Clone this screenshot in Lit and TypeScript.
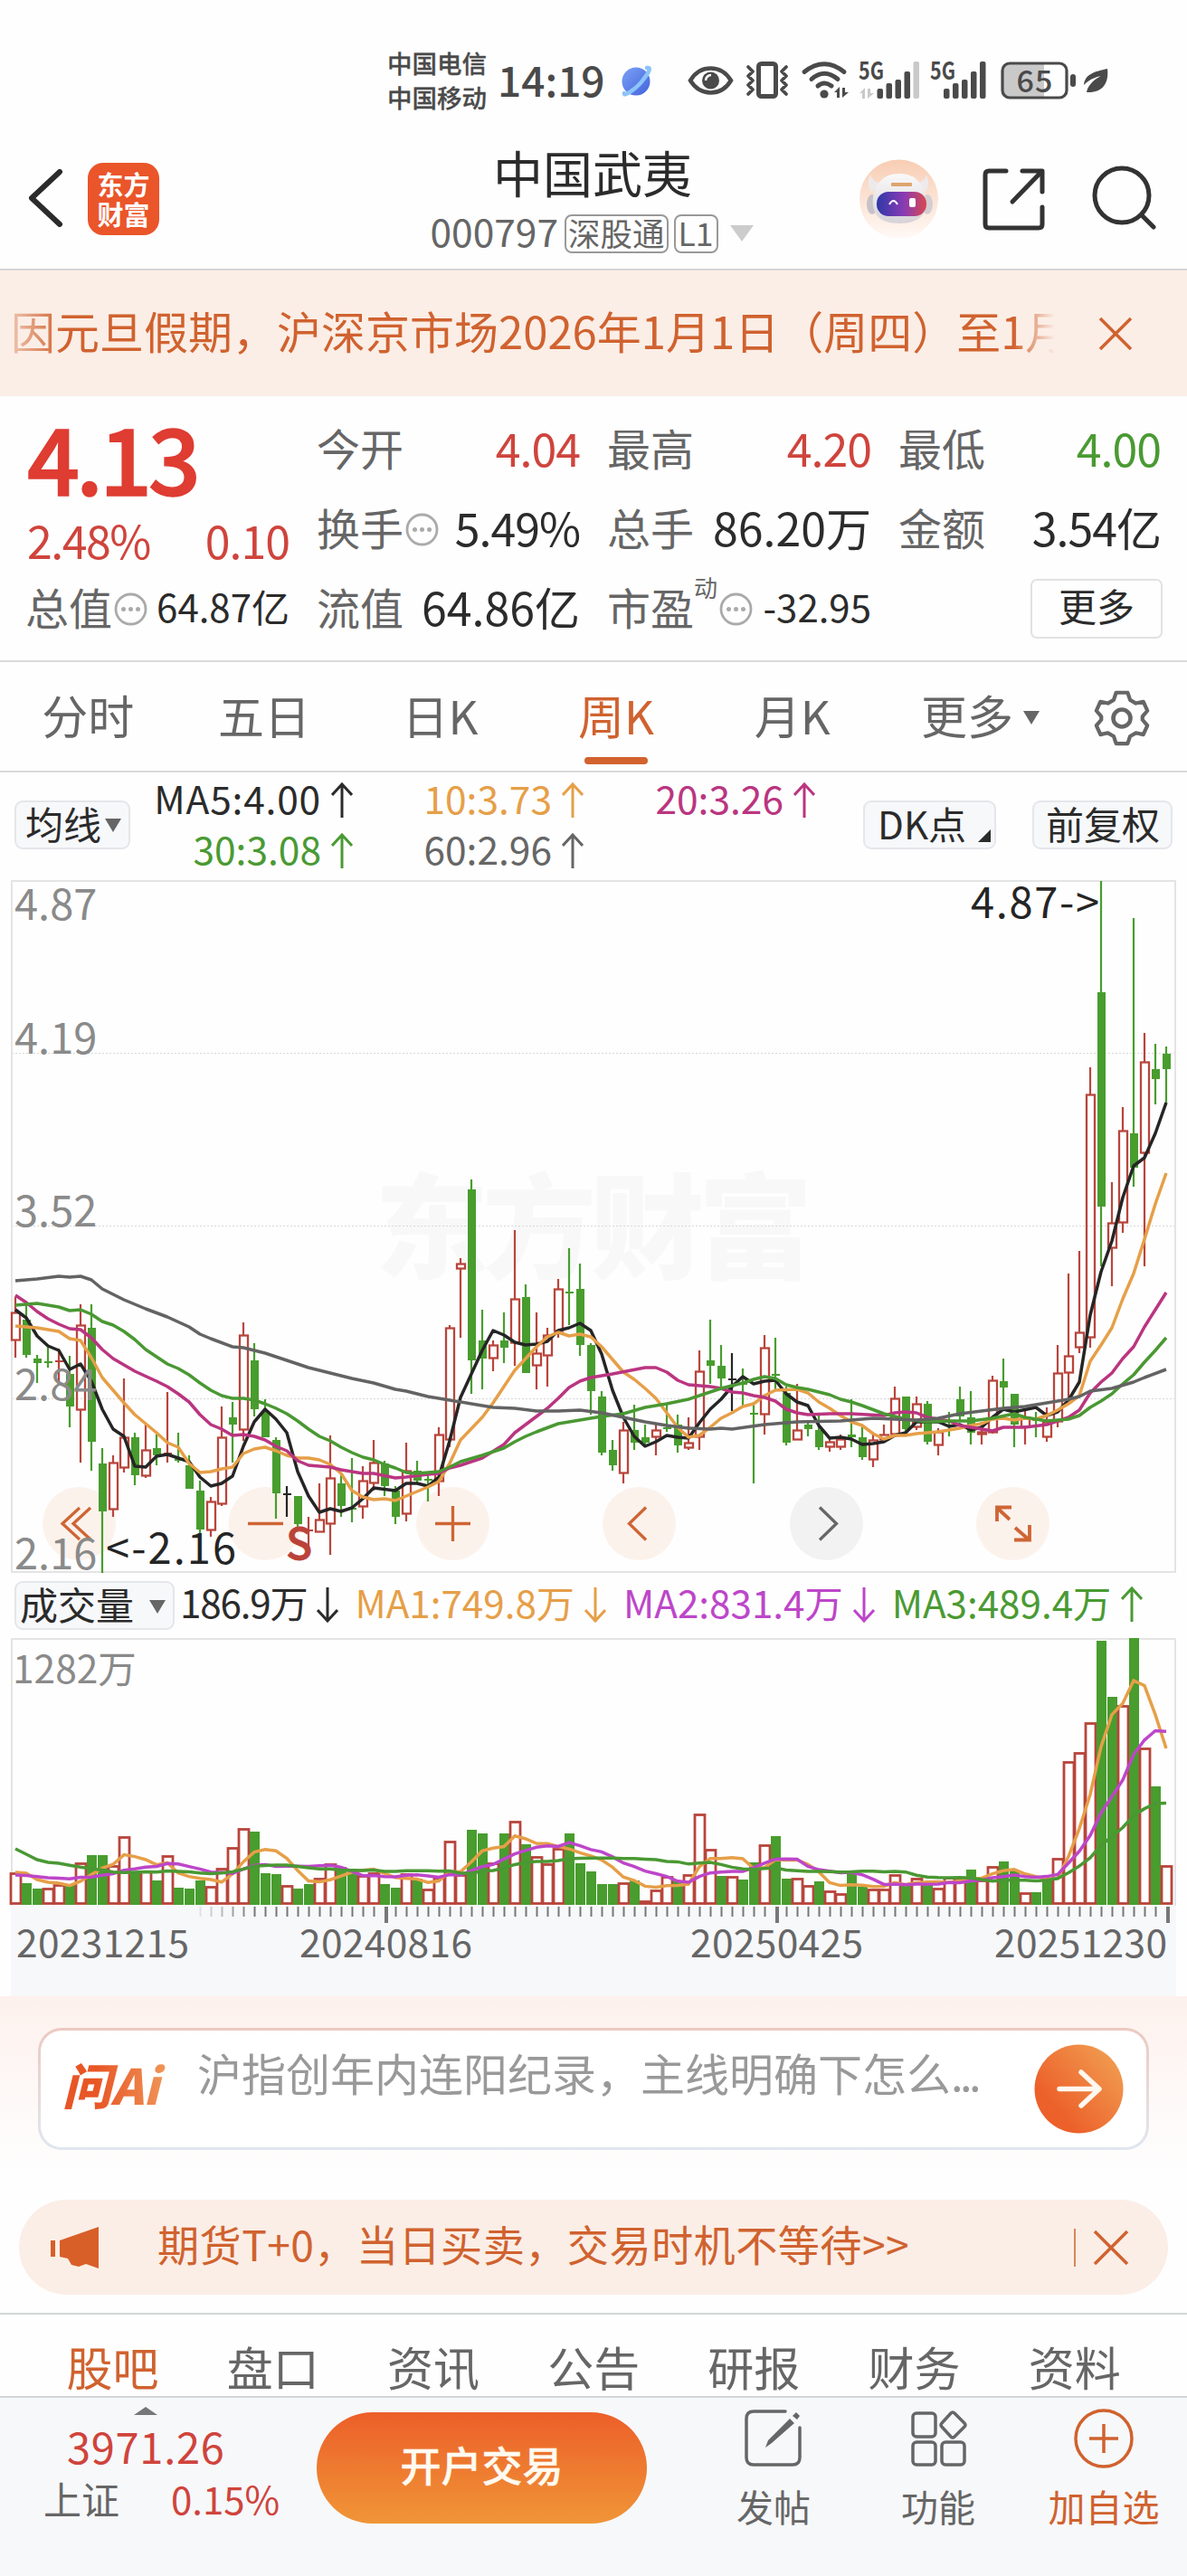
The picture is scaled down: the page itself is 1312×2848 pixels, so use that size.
import { LitElement, html, svg, css } from 'lit';
import { customElement, property } from 'lit/decorators.js';

type Candle = [string, number, number, number, number];
type Point = [number, number];

const RED = '#b8453c';
const GREEN = '#489d2e';
const ORANGE = '#e69f48';
const STEP = 12;
const FIRST_X = 17;

const cx = (i: number) => FIRST_X + i * STEP;

// colour, high, body top, body bottom, low (offsets from the top of the chart)
const candles: Candle[] = [
  ['r', 460, 477, 508, 527], ['g', 468, 485, 524, 527], ['g', 524, 528, 533, 555], ['g', 515, 531, 533, 538],
  ['r', 517, 530, 531, 553], ['g', 525, 545, 581, 604], ['r', 468, 491, 585, 643], ['g', 468, 494, 620, 652],
  ['g', 627, 644, 697, 765], ['r', 635, 643, 695, 703], ['r', 550, 615, 649, 654], ['g', 610, 615, 657, 668],
  ['r', 601, 629, 658, 660], ['g', 612, 627, 635, 646], ['r', 565, 632, 634, 643], ['g', 610, 639, 640, 643],
  ['g', 635, 646, 672, 672], ['g', 663, 674, 717, 723], ['r', 681, 686, 718, 725], ['r', 581, 615, 689, 691],
  ['g', 576, 593, 601, 643], ['r', 488, 502, 607, 619], ['g', 511, 530, 584, 592], ['g', 573, 586, 615, 615],
  ['g', 615, 618, 677, 705], ['k', 669, 677, 678, 703], ['g', 680, 680, 711, 714], ['r', 703, 717, 719, 736],
  ['r', 666, 706, 720, 720], ['r', 613, 660, 711, 745], ['g', 655, 666, 691, 703], ['g', 638, 693, 695, 709],
  ['r', 647, 663, 692, 705], ['r', 618, 643, 666, 674], ['g', 641, 644, 669, 680], ['g', 669, 674, 703, 711],
  ['r', 621, 652, 700, 708], ['g', 641, 652, 663, 665], ['g', 656, 661, 663, 686], ['r', 604, 612, 664, 680],
  ['r', 491, 494, 618, 626], ['r', 417, 423, 429, 505], ['g', 330, 341, 530, 567], ['g', 474, 508, 528, 562],
  ['r', 508, 513, 528, 542], ['g', 477, 508, 516, 533], ['r', 386, 462, 511, 536], ['g', 446, 460, 544, 544],
  ['r', 477, 522, 536, 562], ['r', 494, 502, 525, 559], ['r', 440, 451, 498, 505], ['g', 406, 454, 455, 491],
  ['g', 423, 451, 513, 525], ['g', 511, 513, 564, 590], ['g', 564, 570, 632, 635], ['g', 618, 629, 646, 652],
  ['r', 598, 607, 655, 666], ['g', 579, 607, 621, 629], ['g', 601, 615, 621, 624], ['r', 601, 607, 615, 635],
  ['g', 578, 604, 606, 609], ['g', 590, 601, 624, 632], ['r', 593, 621, 627, 629], ['r', 519, 542, 615, 629],
  ['g', 485, 530, 536, 556], ['g', 513, 536, 550, 559], ['k', 522, 550, 551, 586], ['g', 539, 555, 557, 581],
  ['g', 576, 588, 589, 666], ['r', 502, 516, 590, 612], ['g', 505, 545, 547, 562], ['g', 559, 566, 621, 624],
  ['r', 556, 607, 618, 618], ['g', 596, 601, 606, 614], ['g', 591, 607, 626, 629], ['r', 614, 620, 626, 631],
  ['r', 612, 617, 626, 629], ['g', 573, 612, 615, 626], ['g', 603, 615, 637, 640], ['r', 612, 618, 640, 648],
  ['r', 601, 612, 618, 620], ['r', 559, 572, 612, 612], ['g', 570, 570, 606, 611], ['r', 570, 578, 604, 607],
  ['g', 575, 578, 620, 623], ['r', 605, 609, 624, 635], ['g', 587, 597, 599, 614], ['g', 559, 573, 592, 598],
  ['g', 564, 593, 610, 623], ['r', 598, 609, 612, 623], ['r', 547, 552, 610, 611], ['g', 528, 553, 560, 583],
  ['g', 567, 567, 601, 626], ['r', 585, 593, 604, 623], ['g', 587, 593, 597, 615], ['r', 582, 598, 615, 620],
  ['r', 513, 544, 598, 604], ['r', 434, 525, 544, 573], ['r', 409, 499, 516, 522], ['r', 206, 236, 505, 516],
  ['g', 0, 123, 360, 426], ['r', 333, 378, 406, 448], ['r', 250, 276, 378, 389], ['g', 41, 279, 317, 338],
  ['r', 168, 200, 301, 426], ['g', 180, 208, 219, 247], ['g', 183, 191, 208, 245],
];

const averages: { color: string; points: Point[] }[] = [
  {
    color: '#252525',
    points: [
      [0, 474], [1, 483], [2, 503], [3, 514], [4, 519], [5, 540], [6, 534], [7, 553], [8, 584], [9, 606], [10, 614],
      [11, 647], [12, 648], [13, 636], [14, 634], [15, 638], [16, 642], [17, 659], [18, 669], [19, 666], [20, 658],
      [21, 625], [22, 598], [23, 584], [24, 595], [25, 610], [26, 653], [27, 680], [28, 698], [29, 694], [30, 697],
      [31, 693], [32, 683], [33, 671], [35, 674], [36, 666], [37, 666], [38, 669], [39, 659], [40, 619], [41, 571],
      [42, 545], [43, 519], [44, 497], [45, 502], [46, 510], [47, 513], [48, 512], [49, 509], [50, 497], [51, 494],
      [52, 489], [53, 497], [54, 523], [55, 563], [56, 593], [57, 614], [58, 625], [59, 620], [60, 613], [61, 615],
      [62, 616], [63, 599], [64, 584], [65, 573], [66, 559], [67, 548], [68, 556], [69, 553], [70, 552], [71, 567],
      [72, 576], [73, 580], [74, 602], [75, 616], [76, 615], [77, 617], [78, 623], [79, 622], [80, 620], [81, 613],
      [82, 610], [83, 598], [85, 598], [86, 603], [87, 601], [88, 607], [89, 604], [90, 593], [91, 584], [92, 587],
      [94, 582], [95, 591], [96, 587], [97, 574], [98, 554], [99, 480], [100, 432], [101, 398], [102, 350],
      [103, 315], [104, 306], [105, 279], [106, 245],
    ],
  },
  {
    color: ORANGE,
    points: [
      [0, 492], [1, 493], [2, 494], [4, 498], [5, 506], [6, 508], [7, 527], [8, 549], [9, 563], [10, 577], [11, 590],
      [12, 600], [13, 610], [14, 621], [15, 626], [16, 644], [17, 654], [18, 653], [19, 650], [20, 648], [21, 633],
      [22, 628], [23, 626], [24, 630], [25, 635], [26, 638], [27, 638], [28, 640], [29, 645], [30, 655], [31, 674],
      [32, 681], [33, 684], [34, 683], [35, 685], [36, 680], [37, 675], [38, 670], [39, 664], [40, 644], [41, 618],
      [43, 593], [44, 577], [46, 541], [47, 528], [48, 515], [49, 504], [50, 499], [51, 503], [52, 501], [53, 504],
      [54, 515], [55, 529], [56, 543], [57, 551], [58, 561], [59, 572], [60, 588], [61, 604], [62, 615], [63, 613],
      [64, 604], [65, 594], [66, 588], [67, 581], [68, 578], [69, 569], [70, 563], [72, 562], [73, 566], [74, 576],
      [75, 583], [76, 591], [77, 598], [78, 602], [79, 611], [80, 617], [81, 613], [82, 613], [83, 611], [85, 609],
      [87, 605], [88, 602], [89, 600], [90, 595], [91, 594], [92, 596], [93, 594], [94, 595], [95, 591], [96, 585],
      [97, 578], [98, 569], [99, 531], [100, 513], [101, 494], [102, 462], [103, 434], [104, 396], [105, 357],
      [106, 323],
    ],
  },
  {
    color: '#ba3580',
    points: [
      [0, 458], [1, 466], [2, 476], [3, 484], [4, 490], [5, 495], [6, 496], [7, 505], [8, 518], [9, 528], [10, 535],
      [11, 542], [13, 553], [14, 559], [15, 567], [16, 576], [17, 590], [18, 601], [19, 606], [20, 613], [21, 612],
      [22, 614], [23, 618], [24, 625], [25, 630], [26, 641], [27, 646], [29, 648], [30, 651], [32, 655], [33, 655],
      [35, 660], [36, 659], [38, 656], [39, 655], [40, 649], [41, 646], [43, 638], [45, 623], [46, 610], [47, 601],
      [48, 592], [49, 583], [50, 572], [51, 560], [52, 553], [53, 549], [55, 545], [58, 538], [59, 538], [60, 543],
      [61, 552], [62, 557], [64, 559], [65, 561], [66, 565], [67, 566], [68, 569], [69, 571], [70, 575], [71, 584],
      [72, 588], [73, 590], [75, 589], [77, 589], [80, 591], [81, 588], [82, 587], [83, 588], [84, 593], [86, 597],
      [87, 602], [88, 604], [90, 608], [91, 604], [93, 604], [95, 601], [96, 597], [97, 593], [98, 585], [99, 566],
      [100, 554], [101, 544], [102, 528], [103, 515], [104, 493], [105, 474], [106, 455],
    ],
  },
  {
    color: '#4a9833',
    points: [
      [0, 469], [1, 468], [2, 467], [4, 471], [5, 475], [6, 474], [7, 479], [8, 487], [9, 491], [10, 498], [11, 507],
      [12, 518], [13, 526], [14, 534], [15, 539], [16, 546], [17, 555], [18, 563], [19, 569], [20, 572], [21, 572],
      [22, 574], [23, 578], [24, 583], [25, 589], [26, 597], [27, 606], [28, 614], [29, 619], [30, 626], [31, 632],
      [32, 637], [33, 640], [34, 645], [35, 649], [36, 654], [37, 655], [39, 653], [40, 648], [41, 642], [43, 635],
      [45, 627], [46, 620], [47, 614], [48, 609], [50, 600], [52, 596], [54, 592], [56, 589], [58, 582], [60, 578],
      [62, 573], [63, 569], [64, 565], [65, 561], [67, 555], [68, 551], [69, 548], [70, 550], [71, 557], [72, 560],
      [73, 562], [75, 568], [76, 573], [77, 576], [78, 580], [80, 589], [82, 595], [84, 598], [86, 597], [88, 597],
      [90, 594], [92, 589], [93, 593], [95, 597], [97, 595], [98, 591], [99, 582], [100, 575], [101, 567],
      [102, 556], [103, 546], [104, 532], [105, 519], [106, 505],
    ],
  },
  {
    color: '#636363',
    points: [
      [0, 442], [2, 440], [4, 437], [5, 438], [6, 437], [7, 441], [8, 451], [10, 463], [12, 473], [14, 482],
      [16, 493], [17, 501], [18, 506], [20, 515], [21, 516], [23, 522], [25, 530], [27, 538], [29, 544], [31, 550],
      [33, 555], [35, 562], [36, 564], [38, 570], [40, 574], [42, 578], [44, 582], [46, 583], [48, 586], [50, 586],
      [52, 585], [54, 588], [56, 593], [58, 598], [60, 602], [62, 605], [64, 606], [65, 605], [66, 606], [69, 601],
      [71, 599], [72, 598], [76, 597], [79, 594], [81, 595], [83, 596], [85, 594], [87, 589], [89, 586], [91, 583],
      [93, 581], [95, 577], [97, 573], [98, 570], [99, 564], [101, 561], [103, 554], [104, 549], [106, 540],
    ],
  },
];

const volumes = [
  36, 24, 18, 19, 23, 23, 47, 55, 55, 44, 76, 37, 38, 27, 55, 19, 18, 27, 21, 41, 64, 85, 81, 35, 34, 22, 18, 23, 30,
  46, 42, 40, 33, 36, 23, 19, 35, 29, 18, 31, 71, 34, 83, 79, 47, 79, 93, 67, 54, 46, 63, 79, 46, 37, 23, 23, 25, 27,
  5, 17, 32, 27, 34, 101, 62, 32, 32, 28, 47, 67, 76, 29, 30, 22, 26, 16, 13, 34, 20, 18, 18, 34, 22, 30, 22, 19, 31,
  31, 39, 28, 43, 48, 38, 14, 14, 28, 52, 159, 169, 202, 292, 230, 221, 295, 174, 131, 44,
];
// same order as the volumes, ten weeks per group
const volumeColors = [
  'rggrrgrggr', 'rgrgrgggrr', 'rrgggrggrr', 'ggrrggrgrr', 'rrggrgrgrr', 'rgggggrgrr', 'rgrrrgrggr', 'ggrrgrrggr',
  'rrgrgrrrgr', 'rggrggrrrr', 'ggrgrgr',
].join('');

// weeks before the visible range, only needed for the averages
const earlier = [144, 138, 79, 45, 65, 88, 88, 88, 88, 87, 30, 30, 30, 30, 30, 29, 53, 34, 28];

const movingAverage = (size: number): Point[] => {
  const all = [...earlier, ...volumes];
  return volumes.map((_, i): Point => {
    const end = i + earlier.length + 1;
    const sum = all.slice(end - size, end).reduce((a, b) => a + b, 0);
    return [i, 295 - sum / size];
  });
};

const toPoints = (points: Point[]) => points.map(([i, y]) => `${cx(i)},${y}`).join(' ');

@customElement('status-bar')
export class StatusBar extends LitElement {
  static styles = css`
    :host {
      display: flex;
      height: 130px;
      color: #4a4a4a;
      font-weight: 500;
    }
    .carriers {
      margin: 50px 0 0 428px;
      width: 122px;
      font-size: 27.5px;
      line-height: 38px;
      -webkit-text-stroke: 0.3px #4a4a4a;
    }
    .time {
      margin-top: 64px;
      width: 136px;
      font-size: 46px;
      line-height: 46px;
      white-space: nowrap;
    }
    svg {
      display: block;
      margin-top: 60px;
      overflow: visible;
    }
  `;

  signal(x: number, labelX: number, last: string) {
    return svg`
      <text x=${labelX} y="88" font-size="27" font-weight="700" textLength="28" lengthAdjust="spacingAndGlyphs">5G</text>
      <rect x=${x} y="98" width="6.5" height="11" rx="2" />
      <rect x=${x + 10} y="92" width="6.5" height="17" rx="2" />
      <rect x=${x + 20} y="88" width="6.5" height="21" rx="2" />
      <rect x=${x + 30} y="79" width="6.5" height="30" rx="2" />
      <rect x=${x + 40} y="68" width="6.5" height="41" rx="2" fill=${last} />
    `;
  }

  render() {
    return html`
      <div class="carriers"><div>中国电信</div><div>中国移动</div></div>
      <div class="time">14:19</div>
      <svg width="554" height="60" viewBox="686 60 554 60" fill="#4a4a4a">
        <defs>
          <linearGradient id="planet" x1="0" y1="0" x2="1" y2="1">
            <stop offset="0" stop-color="#7ba2f5" />
            <stop offset="1" stop-color="#4262dc" />
          </linearGradient>
        </defs>
        <circle cx="703" cy="90" r="15.5" fill="url(#planet)" />
        <path d="M690 103C688 108 704 98 711 88C718 79 720 74 715 75" fill="none" stroke="#8cc4fa" stroke-width="4.5" stroke-linecap="round" />
        <path d="M763 89C774 71 797 71 808 89C797 107 774 107 763 89Z" fill="none" stroke="#4a4a4a" stroke-width="4.5" />
        <circle cx="785.5" cy="89" r="9.5" />
        <path d="M780 89a6 6 0 0 1 6-6" fill="none" stroke="#fff" stroke-width="2.5" />
        <rect x="838.5" y="70.5" width="19" height="36" rx="3" fill="none" stroke="#4a4a4a" stroke-width="5" />
        <path d="M827 74l5 5-5 5 5 5-5 5 5 5-5 5M869 74l-5 5 5 5-5 5 5 5-5 5 5 5" fill="none" stroke="#4a4a4a" stroke-width="3.8" stroke-linecap="round" stroke-linejoin="round" />
        <g fill="none" stroke="#4a4a4a" stroke-width="5" stroke-linecap="round">
          <path d="M889 79.500Q911 62 933 79.500" />
          <path d="M897 87.500Q911 75 926 87.500" />
          <path d="M904 95Q911 89 919 95" />
        </g>
        <circle cx="911" cy="104" r="4.600" />
        <path d="M922 102l6-6v12h-3v-6zM931 97v11l7-6h-4v-5z" />
        ${this.signal(969.5, 949, '#c9c9c9')}
        <path d="M950 103l6-6v12h-3v-6zM959 98v11l7-6h-4v-5z" fill="#c9c9c9" />
        ${this.signal(1043, 1028, '#4a4a4a')}
        <path d="M1113 71h41v36h-41q-5 0-5-5v-26q0-5 5-5z" fill="#c9c9c9" />
        <rect x="1108" y="70" width="71" height="38" rx="8" fill="none" stroke="#4a4a4a" stroke-width="3.2" />
        <text x="1143.5" y="101.5" font-size="34" text-anchor="middle" textLength="40">65</text>
        <rect x="1183" y="82" width="6" height="14" rx="3" />
        <path d="M1224 76C1210 79 1199 82 1198 94C1206 86 1213 85 1217 84C1207 89 1202 96 1201 102C1218 103 1226 93 1224 76Z" />
      </svg>
    `;
  }
}

@customElement('kline-chart')
export class KlineChart extends LitElement {
  static styles = css`
    :host {
      display: block;
      height: 767px;
    }
    svg {
      display: block;
    }
    .watermark {
      font-size: 126px;
      font-weight: 900;
      fill: #f8f8f8;
    }
    .axis {
      font-size: 47px;
      fill: #8a8a8a;
    }
    .mark {
      font-size: 47px;
      fill: #252525;
    }
    .sell {
      font-size: 48px;
      font-weight: 500;
      fill: #bb4239;
      stroke: #bb4239;
      stroke-width: 0.8px;
    }
  `;

  candle([kind, high, top, bottom, low]: Candle, i: number) {
    const x = cx(i);
    const color = kind === 'r' ? RED : kind === 'g' ? GREEN : '#252525';
    const flat = bottom - top < 3;
    if (kind === 'r' && !flat) {
      return svg`
        <path d="M${x} ${high}V${top}M${x} ${bottom}V${low}" stroke=${color} stroke-width="2.2" />
        <rect x=${x - 4} y=${top + 0.5} width="9" height=${bottom - top - 1} fill="none" stroke=${color} stroke-width="2.3" />
      `;
    }
    return svg`
      <path d="M${x} ${high}V${low}" stroke=${color} stroke-width="2.2" />
      <rect x=${x - 4} y=${top} width="9" height=${Math.max(bottom - top, 2)} fill=${color} />
    `;
  }

  render() {
    return html`
      <svg width="1312" height="767" viewBox="0 -1 1312 767">
        <text class="watermark" x="414" y="430" textLength="484">东方财富</text>
        <path d="M13 190.500H1299M13 381.500H1299M13 572.500H1299" stroke="#d8d8d8" stroke-dasharray="2 2" />
        <g fill="#fcf2ec">
          <circle cx="87.500" cy="710.500" r="40.500" />
          <circle cx="293" cy="710.500" r="40.500" />
          <circle cx="500.500" cy="710.500" r="40.500" />
          <circle cx="706.500" cy="710.500" r="40.500" />
          <circle cx="913.500" cy="710.500" r="40.500" fill="#f2f2f2" />
          <circle cx="1119.500" cy="710.500" r="40.500" />
        </g>
        <g fill="none" stroke="#ce6534" stroke-width="3.300">
          <path d="M88 693L69 710.500L88 728M100 693L81 710.500L100 728" />
          <path d="M274 710.500H313M481 710.500H520M500.500 691V730" />
          <path d="M714 692.500L695.500 710.500L714 728.500" />
          <path d="M906 692.500L924.500 710.500L906 728.500" stroke="#666" />
          <path d="M1116 706L1102 693M1102 708V692.500H1118M1122 715L1137 728M1138 712V728.500H1121" stroke-width="3.800" />
        </g>
        <rect x="13" y="0" width="1286" height="764" fill="none" stroke="#e4e4e4" stroke-width="2" />
        ${candles.map((c, i) => this.candle(c, i))}
        ${averages.map(
          (a) => svg`<polyline points=${toPoints(a.points)} fill="none" stroke=${a.color} stroke-width="3.5" stroke-linejoin="round" />`
        )}
        <g class="axis">
          <text x="16" y="43">4.87</text>
          <text x="16" y="191">4.19</text>
          <text x="16" y="382">3.52</text>
          <text x="16" y="574">2.84</text>
          <text x="16" y="761">2.16</text>
        </g>
        <text class="mark" x="1073" y="41" textLength="142">4.87-&gt;</text>
        <text class="mark" x="117" y="755" textLength="144">&lt;-2.16</text>
        <text class="sell" x="316" y="750">S</text>
      </svg>
    `;
  }
}

@customElement('volume-chart')
export class VolumeChart extends LitElement {
  static styles = css`
    :host {
      display: block;
      height: 396px;
    }
    svg {
      display: block;
    }
    .max {
      font-size: 42.5px;
      fill: #8a8a8a;
    }
    .date {
      font-size: 42.5px;
      fill: #666;
    }
  `;

  bar(height: number, i: number) {
    const x = cx(i);
    if (volumeColors[i] === 'g') {
      return svg`<rect x=${x - 5} y=${295 - height} width="11" height=${height} fill=${GREEN} />`;
    }
    return svg`<rect x=${x - 5} y=${296.5 - height} width="11" height=${Math.max(height - 3, 1)} fill="#fff" stroke=${RED} stroke-width="2.8" />`;
  }

  tick(i: number) {
    const major = i === 34 || i === 70 || i === 106;
    const opacity = Math.min(1, Math.max(0, (i - 16) / 6));
    return svg`<rect x=${cx(i) - (major ? 0 : 0.5)} y="297" width=${major ? 4 : 2} height=${major ? 18 : 11} fill="#777" opacity=${opacity} />`;
  }

  render() {
    return html`
      <svg width="1312" height="396" viewBox="0 0 1312 396">
        <rect x="12" y="296" width="1288" height="100" fill="#f7f8fa" />
        <path d="M13 296V1H1299V296" fill="none" stroke="#e4e4e4" stroke-width="2" />
        <text class="max" x="14" y="50">1282万</text>
        ${volumes.map((v, i) => this.bar(v, i))}
        <polyline points=${toPoints(movingAverage(5))} fill="none" stroke=${ORANGE} stroke-width="3.5" />
        <polyline points=${toPoints(movingAverage(10))} fill="none" stroke="#bd46c9" stroke-width="3.5" />
        <polyline points=${toPoints(movingAverage(20))} fill="none" stroke="#4a9833" stroke-width="3.5" />
        ${volumes.map((_, i) => this.tick(i))}
        <g class="date">
          <text x="18" y="353" textLength="191">20231215</text>
          <text x="331" y="353" textLength="191">20240816</text>
          <text x="763" y="353" textLength="191">20250425</text>
          <text x="1099" y="353" textLength="191">20251230</text>
        </g>
      </svg>
    `;
  }
}

@customElement('trend-value')
export class TrendValue extends LitElement {
  static styles = css`
    :host {
      display: flex;
      align-items: center;
      justify-content: flex-end;
      white-space: nowrap;
    }
    svg {
      margin: 5px 0 0 11px;
      flex: none;
    }
  `;

  @property() text = '';
  @property() dir = 'up';

  render() {
    return html`
      <span>${this.text}</span>
      <svg width="24" height="40" viewBox="0 0 24 40" fill="none" stroke="currentColor" stroke-width="3">
        <path d=${this.dir === 'up' ? 'M12 39V2M1 14L12 2L23 14' : 'M12 1V38M1 26L12 38L23 26'} />
      </svg>
    `;
  }
}

@customElement('app-root')
export class AppRoot extends LitElement {
  static styles = css`
    :host {
      display: flex;
      flex-direction: column;
      width: 1312px;
      height: 2848px;
      overflow: hidden;
      background: #fefefe;
      color: #2b2b2b;
      font-family: 'Noto Sans CJK SC', 'Noto Sans', sans-serif;
      line-height: 1;
    }
    * {
      box-sizing: border-box;
    }
    svg {
      display: block;
      flex: none;
    }
    .red { color: #cf443c; }
    .green { color: #4a9a33; }
    .orange { color: #e69f48; }
    .pink { color: #ba3580; }
    .violet { color: #bd46c9; }
    .gray { color: #666; }

    /* header */
    .header {
      display: flex;
      height: 169px;
      border-bottom: 2px solid #d5d5d5;
    }
    .back {
      margin: 57px 0 0 30px;
    }
    .logo {
      flex: none;
      margin: 50px 0 0 27px;
      width: 79px;
      height: 80px;
      padding-top: 7px;
      border-radius: 17px;
      background: #ea552a;
      color: #fff;
      font-size: 29px;
      font-weight: 700;
      line-height: 33px;
      text-align: center;
    }
    .heading {
      display: flex;
      flex: none;
      flex-direction: column;
      align-items: center;
      width: 774px;
      padding-top: 32px;
    }
    .name {
      font-size: 55px;
      margin-right: -184px;
    }
    .code {
      display: flex;
      align-items: center;
      margin: 19px -182px 0 0;
      height: 44px;
      font-size: 42.5px;
      color: #666;
    }
    .code span {
      margin: -6px 7px 0 0;
    }
    .code .tag {
      height: 43px;
      padding: 0 2px;
      margin: 0 6px 0 0;
      border: 2px solid #999;
      border-radius: 8px;
      font-size: 35.5px;
      line-height: 35px;
    }
    .code .level { padding: 0 3px; }
    .down {
      margin-left: 7px;
      border: 13px solid transparent;
      border-top: 18px solid #ccc;
      border-bottom: 0;
    }
    .robot { margin: 46px 0 0 0; }
    .share { margin: 54px 0 0 47px; }
    .search { margin: 50px 0 0 48px; }

    /* notice */
    .notice {
      display: flex;
      align-items: center;
      height: 139px;
      padding-left: 12px;
      background: #fbeee6;
      color: #d0622f;
    }
    .marquee {
      width: 1154px;
      margin-right: 47px;
      padding-bottom: 8px;
      overflow: hidden;
      white-space: nowrap;
      font-size: 49px;
      line-height: 60px;
      mask-image: linear-gradient(90deg, rgba(0, 0, 0, 0.3), #000 5%, #000 96%, transparent);
    }

    /* quote */
    .quote {
      display: grid;
      grid-template-columns: 290px 291px 292px 290px;
      column-gap: 30px;
      height: 294px;
      padding: 12px 0 0 30px;
      border-bottom: 2px solid #dadada;
      font-size: 50px;
    }
    .cell {
      display: flex;
      align-items: center;
      height: 88px;
      white-space: nowrap;
    }
    .cell .value { margin-left: auto; }
    .cell .tight { letter-spacing: -1px; }
    .label {
      font-size: 48px;
      color: #666;
    }
    .small { font-size: 42px; }
    .price {
      height: 114px;
      padding-bottom: 6px;
      color: #df3c32;
      font-size: 102px;
      font-weight: 500;
      letter-spacing: -4.3px;
      -webkit-text-stroke: 1.5px #df3c32;
    }
    .change { height: 64px; }
    .change span:first-child { letter-spacing: -1.5px; }
    .total { height: 84px; margin-left: -2px; }
    .dots { margin: 6px 0 0 2px; }
    .sup {
      align-self: flex-start;
      margin-top: 10px;
      font-size: 26px;
      color: #666;
    }
    .more {
      margin: 5px -2px 0 auto;
      width: 146px;
      height: 66px;
      border: 2px solid #e2e2e2;
      border-radius: 7px;
      font-size: 42px;
      line-height: 54px;
      text-align: center;
    }

    /* periods */
    .periods {
      display: flex;
      height: 122px;
      border-bottom: 2px solid #dadada;
      color: #666;
      font-size: 51px;
    }
    .period {
      flex: none;
      width: 194.6px;
      padding-top: 33px;
      text-align: center;
    }
    .period.on { color: #d0622f; }
    .period.on::after {
      content: '';
      display: block;
      width: 70px;
      height: 8px;
      margin: 21px auto 0;
      border-radius: 4px;
      background: #d2622e;
    }
    .period.wide {
      display: flex;
      width: 234px;
      padding-left: 45px;
    }
    .caret {
      align-self: flex-start;
      border: 9px solid transparent;
      border-top: 15px solid #666;
      border-bottom: 0;
    }
    .wide .caret { margin: 21px 0 0 11px; }
    .gear { margin-top: 28px; }

    /* averages */
    .averages {
      display: flex;
      height: 119px;
      padding-left: 16px;
      font-size: 42.5px;
    }
    .pill {
      display: flex;
      flex: none;
      align-items: center;
      height: 54px;
      padding-bottom: 5px;
      border: 2px solid #e4e6ea;
      border-radius: 9px;
      background: #f7f8fa;
      font-size: 42px;
      white-space: nowrap;
    }
    .kind { width: 128px; margin-top: 31px; padding-left: 10px; }
    .kind .caret { margin: 18px 0 0 4px; }
    .values {
      display: grid;
      grid-template-columns: 246px 255px 256px;
      grid-auto-rows: 56px;
      margin-right: 53px;
    }
    .first { letter-spacing: 0.8px; }
    .dk { width: 147px; margin: 31px 40px 0 0; padding-left: 14px; }
    .dk i {
      align-self: flex-end;
      margin: 0 0 1px 13px;
      border-left: 14px solid transparent;
      border-bottom: 14px solid #2b2b2b;
    }
    .fq { width: 155px; margin-top: 31px; padding-left: 13px; }

    .volume-row {
      display: flex;
      height: 71px;
      padding-left: 16px;
      font-size: 42.2px;
    }
    .volume-row .pill { width: 177px; margin: 8px 6px 0 0; padding-left: 4px; }
    .volume-row .pill .caret { margin: 19px 0 0 17px; }
    .volume-row trend-value { height: 62px; margin-right: 19px; }
    .volume-row .now { margin-right: 18px; letter-spacing: -1.2px; }

    /* assistant */
    .assistant {
      height: 206px;
      padding: 35px 42px 0;
      background: linear-gradient(#fdf1ed, #fefefe 95%);
    }
    .ask {
      display: flex;
      width: 1228px;
      height: 135px;
      padding-left: 24px;
      border: 3px solid transparent;
      border-radius: 26px;
      background: linear-gradient(#fff, #fff) padding-box, linear-gradient(#ecc9c0, #e0e7f0) border-box;
    }
    .brand {
      flex: none;
      width: 127px;
      height: 66px;
      margin: 29px 22px 0 0;
      background: linear-gradient(90deg, #e85626 30%, #f0a060);
      -webkit-background-clip: text;
      background-clip: text;
      color: transparent;
      font-size: 54px;
      font-weight: 900;
      font-style: italic;
      letter-spacing: -0.2px;
      line-height: 60px;
      white-space: nowrap;
    }
    .question {
      flex: none;
      width: 925px;
      margin-top: 19px;
      font-size: 49px;
      line-height: 54px;
      color: #999;
      white-space: nowrap;
    }
    .question span { letter-spacing: -3.6px; }
    .go { margin-top: 15px; }

    /* promo */
    .promo {
      display: flex;
      align-items: center;
      width: 1270px;
      height: 105px;
      margin: 19px 0 20px 21px;
      padding-left: 34px;
      border-radius: 53px;
      background: #fbeee6;
      color: #d0622f;
    }
    .promo span {
      width: 1013px;
      margin: -8px 0 0 64px;
      font-size: 46.2px;
      letter-spacing: 0.4px;
      white-space: nowrap;
    }

    /* sections */
    .sections {
      display: flex;
      height: 92px;
      padding: 32px 0 0 36px;
      border-top: 2px solid #d3d6d6;
      color: #666;
      font-size: 51px;
    }
    .sections div {
      width: 177.2px;
      text-align: center;
    }
    .sections .on { color: #d0622f; }

    /* bottom bar */
    .bottom {
      display: flex;
      height: 199px;
      border-top: 2px solid #d3d6d6;
      background: #f7f8fa;
      color: #666;
    }
    .index {
      flex: none;
      width: 350px;
      padding-left: 48px;
    }
    .up {
      width: 0;
      margin: 10px 0 0 100px;
      border: 13px solid transparent;
      border-bottom: 9px solid #777;
      border-top: 0;
    }
    .points {
      margin: 10px 0 0 26px;
      font-size: 47px;
      letter-spacing: 0.7px;
    }
    .rate {
      display: flex;
      margin-top: 14px;
      gap: 57px;
      font-size: 42px;
    }
    .trade {
      flex: none;
      width: 365px;
      height: 123px;
      margin: 16px 64px 0 0;
      border-radius: 62px;
      background: linear-gradient(#ec5f29, #f09537);
      color: #fffaf0;
      font-size: 45px;
      font-weight: 500;
      line-height: 116px;
      text-align: center;
      -webkit-text-stroke: 0.5px #fffaf0;
    }
    .action {
      display: flex;
      flex: none;
      flex-direction: column;
      align-items: center;
      width: 152px;
      margin-right: 30px;
      padding-top: 12px;
      font-size: 41px;
    }
    .action svg { margin-bottom: 21px; }
    .action.add { width: 154px; margin-right: 0; color: #d0622f; }
  `;

  dots() {
    return html`
      <svg class="dots" width="37" height="37" viewBox="0 0 37 37" fill="#aaa">
        <circle cx="18.5" cy="18.5" r="16.5" fill="none" stroke="#aaa" stroke-width="2.8" />
        <circle cx="10.5" cy="18.5" r="2.5" /><circle cx="18.5" cy="18.5" r="2.5" /><circle cx="26.5" cy="18.5" r="2.5" />
      </svg>
    `;
  }

  header() {
    return html`
      <div class="header">
        <svg class="back" width="40" height="64" viewBox="0 0 40 64" fill="none" stroke="#2b2b2b" stroke-width="6">
          <path d="M36 3L5 32L36 61" stroke-linecap="round" stroke-linejoin="round" />
        </svg>
        <div class="logo">东方<br />财富</div>
        <div class="heading">
          <div class="name">中国武夷</div>
          <div class="code">
            <span>000797</span>
            <div class="tag">深股通</div>
            <div class="tag level">L1</div>
            <div class="down"></div>
          </div>
        </div>
        <svg class="robot" width="87" height="88" viewBox="0 0 87 88">
          <defs>
            <linearGradient id="halo" x1="0" y1="0" x2="0" y2="1">
              <stop offset="0" stop-color="#f8cdb3" />
              <stop offset="1" stop-color="#fff9f6" />
            </linearGradient>
            <linearGradient id="visor">
              <stop offset="0" stop-color="#2f38a8" />
              <stop offset="0.55" stop-color="#8a3bb4" />
              <stop offset="1" stop-color="#d9484f" />
            </linearGradient>
            <linearGradient id="helmet" x1="0" y1="0" x2="0" y2="1">
              <stop offset="0" stop-color="#faf9f9" />
              <stop offset="1" stop-color="#d6d2d8" />
            </linearGradient>
          </defs>
          <circle cx="43.5" cy="44" r="43.5" fill="url(#halo)" />
          <ellipse cx="14" cy="50" rx="6" ry="11" fill="#c6c2c7" />
          <ellipse cx="75" cy="50" rx="6" ry="11" fill="#d2ced3" />
          <path d="M12 17Q7 28 13 36L27 27Q14 26 12 17zM74 17Q79 28 73 36L60 27Q72 26 74 17z" fill="#eeeaeb" />
          <path d="M44 16C62 16 70 27 73 42C76 60 67 71 44 71C21 71 13 60 15 42C18 27 26 16 44 16z" fill="url(#helmet)" />
          <rect x="35" y="26" width="23" height="4" rx="1" fill="#dda56e" />
          <rect x="19" y="36" width="55" height="27" rx="13" fill="url(#visor)" />
          <path d="M33 50q4.500-8 9 0" fill="none" stroke="#fff" stroke-width="2" />
          <rect x="55" y="43" width="7" height="10" rx="2" fill="#fff" />
        </svg>
        <svg class="share" width="72" height="72" viewBox="0 0 72 72" fill="none" stroke="#333" stroke-width="5" stroke-linecap="round" stroke-linejoin="round">
          <path d="M28 5H9Q5 5 5 9V64Q5 68 9 68H64Q68 68 68 64V45" />
          <path d="M46 5H68V28M67 6L35 39" />
        </svg>
        <svg class="search" width="76" height="76" viewBox="0 0 76 76" fill="none" stroke="#333" stroke-width="5" stroke-linecap="round">
          <circle cx="36" cy="36" r="30" />
          <path d="M58 58L71 71" />
        </svg>
      </div>
    `;
  }

  quote() {
    return html`
      <div class="quote">
        <div>
          <div class="cell price">4.13</div>
          <div class="cell change red"><span class="tight">2.48%</span><span class="value tight">0.10</span></div>
          <div class="cell total"><span class="label">总值</span>${this.dots()}<span class="value small">64.87亿</span></div>
        </div>
        <div>
          <div class="cell"><span class="label">今开</span><span class="value tight red">4.04</span></div>
          <div class="cell"><span class="label">换手</span>${this.dots()}<span class="value tight">5.49%</span></div>
          <div class="cell"><span class="label">流值</span><span class="value">64.86亿</span></div>
        </div>
        <div>
          <div class="cell"><span class="label">最高</span><span class="value tight red">4.20</span></div>
          <div class="cell"><span class="label">总手</span><span class="value">86.20万</span></div>
          <div class="cell">
            <span class="label">市盈</span><span class="sup">动</span>${this.dots()}<span class="value small">-32.95</span>
          </div>
        </div>
        <div>
          <div class="cell"><span class="label">最低</span><span class="value tight green">4.00</span></div>
          <div class="cell"><span class="label">金额</span><span class="value tight">3.54亿</span></div>
          <div class="cell"><div class="more">更多</div></div>
        </div>
      </div>
    `;
  }

  render() {
    const gear = 'M26 3H40L43 12L50 16L59 14L64 25L58 32V36L64 43L59 54L50 52L43 56L40 65H26L23 56L16 52L7 54L2 43L8 36V32L2 25L7 14L16 16L23 12Z';
    return html`
      <status-bar></status-bar>
      ${this.header()}
      <div class="notice">
        <div class="marquee">因元旦假期，沪深京市场2026年1月1日（周四）至1月</div>
        <svg width="40" height="40" viewBox="0 0 40 40" fill="none" stroke="currentColor" stroke-width="3.5">
          <path d="M3 3L37 37M37 3L3 37" />
        </svg>
      </div>
      ${this.quote()}
      <div class="periods">
        <div class="period">分时</div>
        <div class="period">五日</div>
        <div class="period">日K</div>
        <div class="period on">周K</div>
        <div class="period">月K</div>
        <div class="period wide">更多<div class="caret"></div></div>
        <svg class="gear" width="66" height="68" viewBox="0 0 66 68" fill="none" stroke="#666" stroke-width="4.6" stroke-linejoin="round">
          <path d=${gear} transform="translate(3 3) scale(0.91)" />
          <circle cx="33" cy="34" r="9.5" />
        </svg>
      </div>
      <div class="averages">
        <div class="pill kind">均线<div class="caret"></div></div>
        <div class="values">
          <trend-value class="first" text="MA5:4.00"></trend-value>
          <trend-value class="orange" text="10:3.73"></trend-value>
          <trend-value class="pink" text="20:3.26"></trend-value>
          <trend-value class="green" text="30:3.08"></trend-value>
          <trend-value class="gray" text="60:2.96"></trend-value>
        </div>
        <div class="pill dk">DK点<i></i></div>
        <div class="pill fq">前复权</div>
      </div>
      <kline-chart></kline-chart>
      <div class="volume-row">
        <div class="pill">成交量<div class="caret"></div></div>
        <trend-value class="now" text="186.9万" dir="down"></trend-value>
        <trend-value class="orange" text="MA1:749.8万" dir="down"></trend-value>
        <trend-value class="violet" text="MA2:831.4万" dir="down"></trend-value>
        <trend-value class="green" text="MA3:489.4万"></trend-value>
      </div>
      <volume-chart></volume-chart>
      <div class="assistant">
        <div class="ask">
          <div class="brand">问Ai</div>
          <div class="question">沪指创年内连阳纪录，主线明确下怎么<span>...</span></div>
          <svg class="go" width="99" height="99" viewBox="0 0 99 99">
            <defs>
              <linearGradient id="go" x1="0.2" y1="0.7" x2="0.9" y2="0.1">
                <stop offset="0" stop-color="#ec602a" />
                <stop offset="1" stop-color="#f19c50" />
              </linearGradient>
            </defs>
            <circle cx="49.5" cy="49.5" r="49" fill="url(#go)" />
            <path d="M28 49.500H71M52 31L72 49.500L52 68" fill="none" stroke="#fff8f0" stroke-width="5.5" stroke-linecap="round" stroke-linejoin="round" />
          </svg>
        </div>
      </div>
      <div class="promo">
        <svg width="55" height="48" viewBox="0 0 55 48" fill="#d85f28">
          <path d="M1 16H6V34H1zM11 16L54 1V47L40 42L32 45L24 43L20 36L11 34z" />
        </svg>
        <span>期货T+0，当日买卖，交易时机不等待&gt;&gt;</span>
        <svg width="62" height="44" viewBox="0 0 62 44" fill="none" stroke="currentColor" stroke-width="3.5">
          <path d="M1 1V43" stroke-width="1.5" />
          <path d="M23 4L59 40M59 4L23 40" />
        </svg>
      </div>
      <div class="sections">
        <div class="on">股吧</div>
        <div>盘口</div>
        <div>资讯</div>
        <div>公告</div>
        <div>研报</div>
        <div>财务</div>
        <div>资料</div>
      </div>
      <div class="bottom">
        <div class="index">
          <div class="up"></div>
          <div class="points red">3971.26</div>
          <div class="rate"><span>上证</span><span class="red">0.15%</span></div>
        </div>
        <div class="trade">开户交易</div>
        <div class="action">
          <svg width="66" height="66" viewBox="0 0 66 66" fill="none" stroke="#666" stroke-width="3.5">
            <path d="M46 3H11Q3 3 3 11V54Q3 62 11 62H54Q62 62 62 54V21" stroke-linecap="round" />
            <path d="M24 43L27 35L51 11L56 16L31 38zM54 8L58 4L62 8L59 12z" fill="#666" stroke="none" />
          </svg>
          <span>发帖</span>
        </div>
        <div class="action">
          <svg width="66" height="66" viewBox="0 0 66 66" fill="none" stroke="#666" stroke-width="3.5">
            <rect x="5" y="5" width="25" height="26" rx="4" />
            <rect x="5" y="37" width="25" height="25" rx="4" />
            <rect x="37" y="37" width="25" height="25" rx="4" />
            <path d="M47 5Q49 3 51 5L62 16Q64 18 62 20L51 31Q49 33 47 31L37 20Q35 18 37 16Z" />
          </svg>
          <span>功能</span>
        </div>
        <div class="action add">
          <svg width="66" height="66" viewBox="0 0 66 66" fill="none" stroke="currentColor" stroke-width="3.5">
            <circle cx="33" cy="33" r="31" />
            <path d="M17 33H49M33 17V49" />
          </svg>
          <span>加自选</span>
        </div>
      </div>
    `;
  }
}
